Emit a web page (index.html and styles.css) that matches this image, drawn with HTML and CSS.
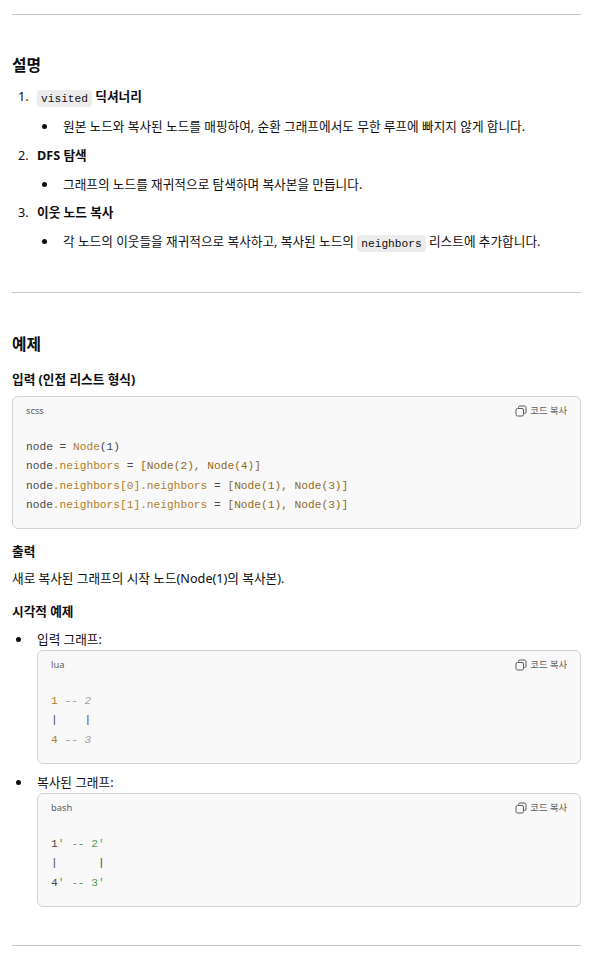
FILE: index.html
```html
<!DOCTYPE html>
<html lang="ko">
<head>
<meta charset="utf-8">
<title>설명</title>
<link rel="stylesheet" href="styles.css">
</head>
<body>
<svg width="0" height="0" class="defs"><defs><symbol id="copy" viewBox="0 0 12 12"><rect x="1" y="3.500" width="7.500" height="7.500" rx="1.500" fill="#f9f9f9" stroke="currentColor"/><path d="M3.500 3.500V2.500A1.500 1.500 0 0 1 5 1h4.500A1.500 1.500 0 0 1 11 2.500V7A1.500 1.500 0 0 1 9.500 8.500H8.500" fill="none" stroke="currentColor"/></symbol></defs></svg>
<hr class="rule">
<h3>설명</h3>
<ol class="steps">
  <li><p class="strong"><code>visited</code> 딕셔너리</p>
    <ul><li>원본 노드와 복사된 노드를 매핑하여, 순환 그래프에서도 무한 루프에 빠지지 않게 합니다.</li></ul></li>
  <li><p class="strong">DFS 탐색</p>
    <ul><li>그래프의 노드를 재귀적으로 탐색하며 복사본을 만듭니다.</li></ul></li>
  <li><p class="strong">이웃 노드 복사</p>
    <ul><li>각 노드의 이웃들을 재귀적으로 복사하고, 복사된 노드의 <code>neighbors</code> 리스트에 추가합니다.</li></ul></li>
</ol>
<hr class="rule mid">
<h3 class="example">예제</h3>
<h4 class="input-title">입력 (인접 리스트 형식)</h4>
<div class="code">
  <div class="code-head"><span>scss</span><span class="copy"><svg class="icon"><use href="#copy"/></svg>코드 복사</span></div>
  <pre>node = <b class="y">Node</b>(1)
node<b class="y">.neighbors</b> = <b class="br">[Node(2), Node(4)]</b>
node<b class="y">.neighbors[0].neighbors</b> = <b class="br">[Node(1), Node(3)]</b>
node<b class="y">.neighbors[1].neighbors</b> = <b class="br">[Node(1), Node(3)]</b></pre>
</div>
<h4>출력</h4>
<p class="para">새로 복사된 그래프의 시작 노드(Node(1)의 복사본).</p>
<h4>시각적 예제</h4>
<ul class="graphs">
  <li>입력 그래프:
    <div class="code">
      <div class="code-head"><span>lua</span><span class="copy"><svg class="icon"><use href="#copy"/></svg>코드 복사</span></div>
      <pre><b class="y">1</b> <i>-- 2</i>
|    |
<b class="y">4</b> <i>-- 3</i></pre>
    </div></li>
  <li>복사된 그래프:
    <div class="code">
      <div class="code-head"><span>bash</span><span class="copy"><svg class="icon"><use href="#copy"/></svg>코드 복사</span></div>
      <pre>1<b class="g">' -- 2'</b>
|      |
4<b class="g">' -- 3'</b></pre>
    </div></li>
</ul>
<hr class="rule last">
</body>
</html>
```
FILE: styles.css
```css
* { box-sizing: border-box; }
html, body { background: #fff; }
body {
  margin: 0;
  padding: 14px 23px 0 12px;
  height: 966px;
  overflow: hidden;
  font-family: "Noto Sans", "Noto Sans CJK KR", sans-serif;
  font-size: 12.670px;
  line-height: 22px;
  color: #0d0d0d;
}
.defs { position: absolute; }
.rule { height: 1px; margin: 0; border: 0; background: #c4c4c4; }
.rule.mid { margin-top: 40px; }
.rule.last { margin-top: 38px; }
h3 { margin: 0; padding-top: 39px; font-size: 15.750px; line-height: 22px; font-weight: 700; }
h3.example { padding-top: 40px; }
h4 { margin: 11px 0 0; font-size: 12.670px; line-height: 22px; font-weight: 700; }
h4.input-title { margin-top: 13px; margin-bottom: 6px; }
p { margin: 0; }
.strong { font-weight: 700; }
.steps { margin: 9px 0 0; padding: 0 0 0 20px; }
.steps > li { padding-left: 5px; }
.steps > li + li { margin-top: 6.500px; }
.steps ul { margin: 7px 0 0; padding: 0 0 0 21px; list-style: disc; }
.steps > li:first-child ul { margin-top: 8px; }
.steps ul > li { padding-left: 5px; }
.graphs { margin: 6px 0 0; padding: 0 0 0 20px; }
.graphs > li { padding-left: 5px; }
.graphs > li + li { margin-top: 7px; }
code {
  font-family: "Liberation Mono", monospace;
  font-size: 11.200px;
  line-height: 1;
  font-weight: 400;
  background: #ececec;
  color: #0d0d0d;
  padding: 2.500px 4px;
  border-radius: 4px;
}
.code {
  background: #f9f9f9;
  border: 1px solid #d2d2d2;
  border-radius: 6px;
  padding: 0 13px;
}
.code-head {
  display: flex;
  justify-content: space-between;
  align-items: center;
  height: 27px;
  font-size: 9.300px;
  line-height: 12px;
  color: #5d5d5d;
}
.copy { display: flex; align-items: center; gap: 3px; }
.icon { width: 12px; height: 12px; }
pre {
  margin: 0;
  padding: 14px 0 13px;
  font-family: "Liberation Mono", monospace;
  font-size: 11.200px;
  line-height: 19.300px;
  color: #4a4a4a;
}
b { font-weight: 400; }
.y { color: #b07f2a; }
.br { color: #8f6a24; }
.g { color: #4f9d4f; }
i { color: #a0a0a0; font-style: italic; }
.para { margin-top: 5px; }
```
